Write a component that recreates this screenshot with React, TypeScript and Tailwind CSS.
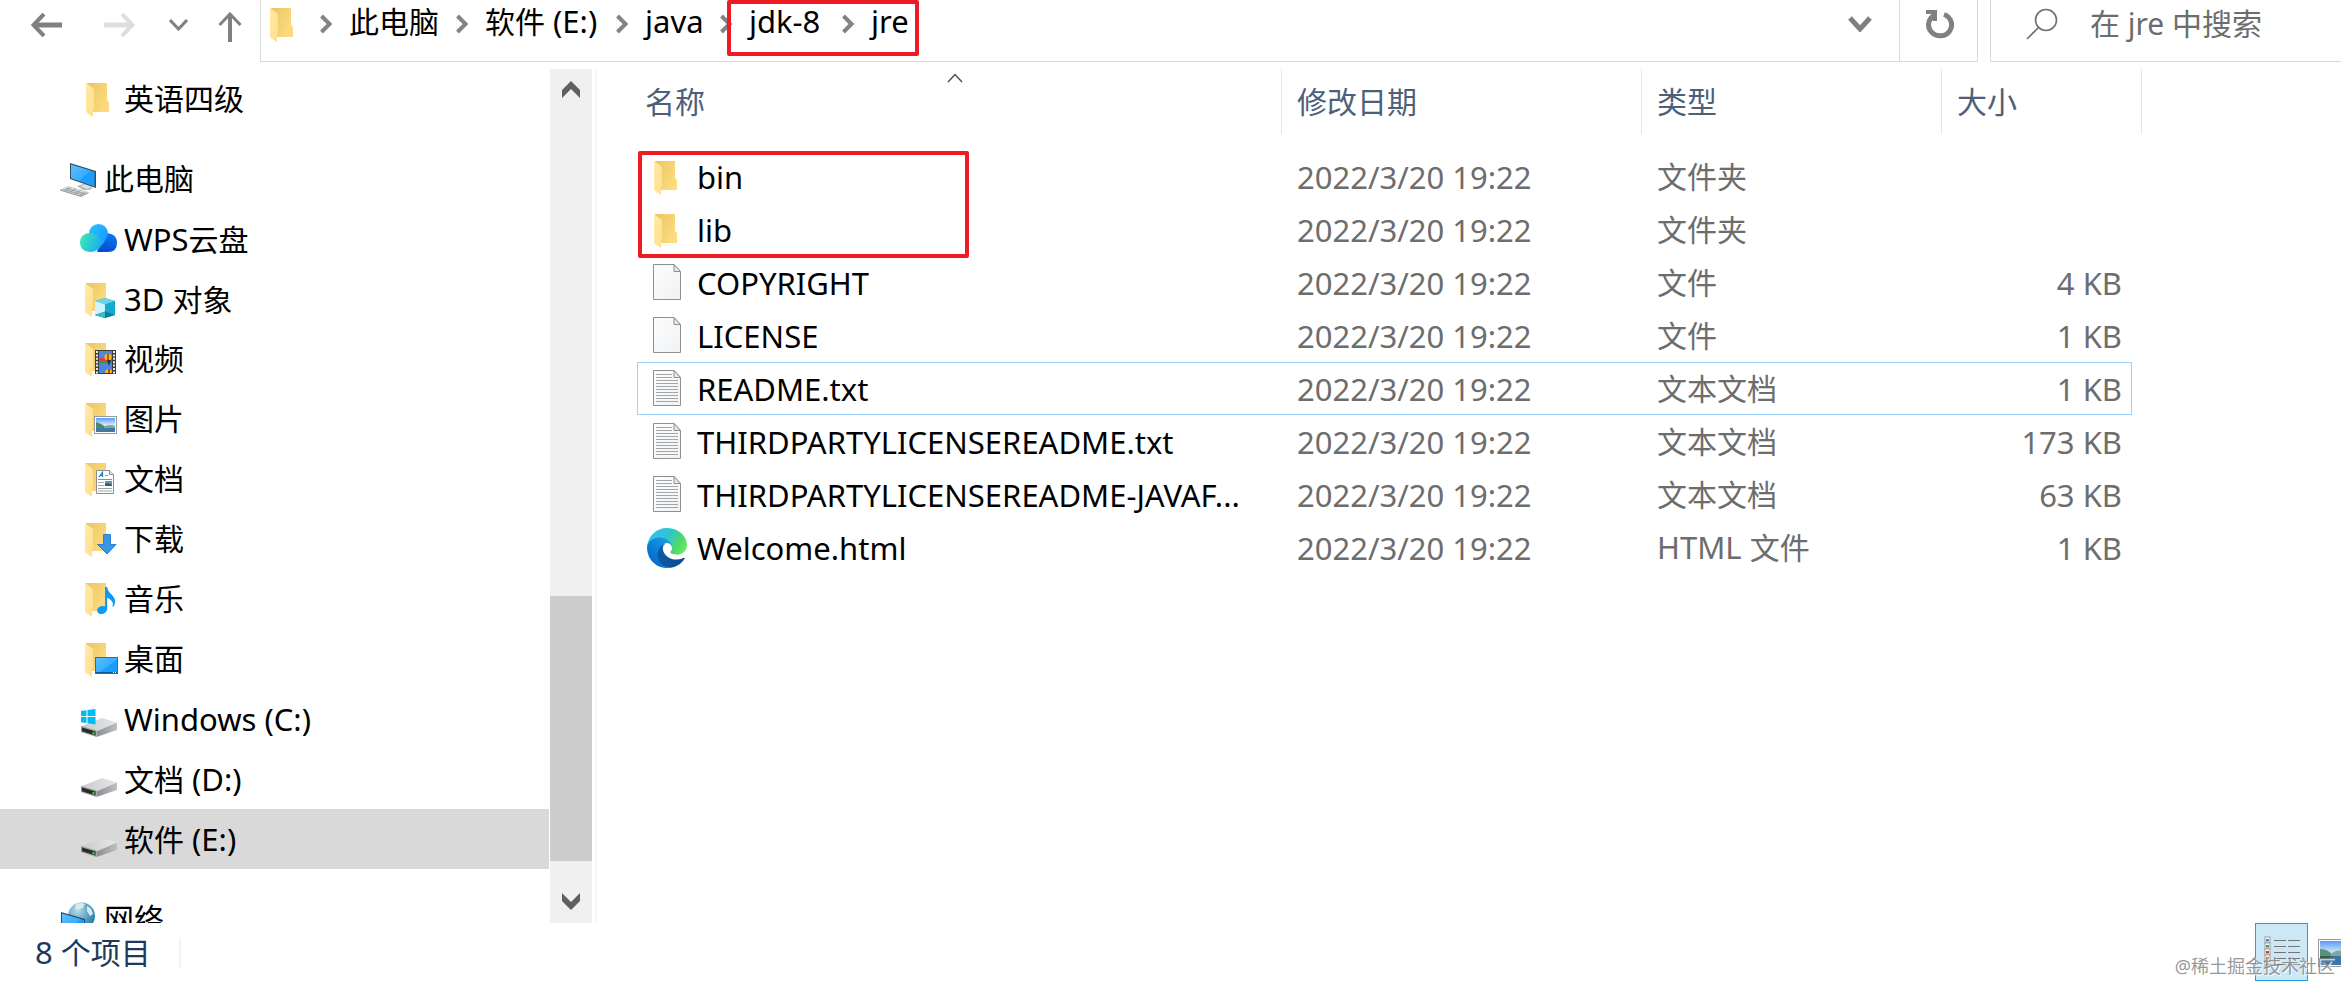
import type { ReactNode } from "react";

/* Latin runs are set slightly larger than Han characters so the two scripts look even. */
function Mixed({ text }: { text: string }) {
  const parts = text.split(/([\u2e80-\u9fff]+)/).filter(Boolean);
  return (
    <>
      {parts.map((part, i) =>
        /[\u2e80-\u9fff]/.test(part) ? (
          <span key={i} className="text-[30px]">{part}</span>
        ) : (
          <span key={i} className="text-[31px] whitespace-pre">{part}</span>
        ),
      )}
    </>
  );
}

function Defs() {
  return (
    <svg width="0" height="0" className="absolute" aria-hidden="true">
      <defs>
        <linearGradient id="flap" x1="0" y1="0" x2="1" y2="1">
          <stop offset="0" stopColor="#ffeaa8" />
          <stop offset="1" stopColor="#ffe08a" />
        </linearGradient>
        <linearGradient id="back" x1="0" y1="0" x2="1" y2="0.6">
          <stop offset="0" stopColor="#e9c462" />
          <stop offset="1" stopColor="#fddc7f" />
        </linearGradient>
        <linearGradient id="screen" x1="0" y1="0" x2="1" y2="1">
          <stop offset="0" stopColor="#5cc0ff" />
          <stop offset="0.55" stopColor="#38acff" />
          <stop offset="0.56" stopColor="#1b9dff" />
          <stop offset="1" stopColor="#1b9dff" />
        </linearGradient>
        <linearGradient id="cloudTop" x1="0" y1="0" x2="1" y2="1">
          <stop offset="0" stopColor="#2bc3ff" />
          <stop offset="1" stopColor="#1090ff" />
        </linearGradient>
        <linearGradient id="cloudRight" x1="0.6" y1="0" x2="0.3" y2="1">
          <stop offset="0" stopColor="#0a78f0" />
          <stop offset="1" stopColor="#0648cf" />
        </linearGradient>
        <linearGradient id="cloudLeft" x1="0" y1="0.3" x2="1" y2="0.6">
          <stop offset="0" stopColor="#3fe6b4" />
          <stop offset="1" stopColor="#12a6fa" />
        </linearGradient>
        <linearGradient id="driveTop" x1="0" y1="0" x2="1" y2="0">
          <stop offset="0" stopColor="#c9cacc" />
          <stop offset="1" stopColor="#e6e7ea" />
        </linearGradient>
        <linearGradient id="driveSide" x1="0" y1="0" x2="1" y2="0">
          <stop offset="0" stopColor="#8b8c8e" />
          <stop offset="1" stopColor="#bfc0c2" />
        </linearGradient>
        <linearGradient id="paper" x1="0" y1="0" x2="1" y2="1">
          <stop offset="0" stopColor="#fdfdfd" />
          <stop offset="1" stopColor="#f0f2f4" />
        </linearGradient>
        <linearGradient id="sky" x1="0" y1="0" x2="0" y2="1">
          <stop offset="0" stopColor="#5b9bf5" />
          <stop offset="0.55" stopColor="#e3f3fb" />
          <stop offset="1" stopColor="#e3f3fb" />
        </linearGradient>
        <radialGradient id="globe" cx="0.35" cy="0.3" r="0.8">
          <stop offset="0" stopColor="#b9dbe8" />
          <stop offset="0.6" stopColor="#4d9dc0" />
          <stop offset="1" stopColor="#1f6f9b" />
        </radialGradient>
        <linearGradient id="edgeDark" x1="0.1" y1="0.7" x2="1" y2="0.7">
          <stop offset="0" stopColor="#0c59a4" />
          <stop offset="1" stopColor="#114a8b" />
        </linearGradient>
        <linearGradient id="edgeBlue" x1="0.9" y1="0.2" x2="0.2" y2="1">
          <stop offset="0" stopColor="#1b9de2" />
          <stop offset="0.4" stopColor="#0f85dc" />
          <stop offset="1" stopColor="#0067c8" />
        </linearGradient>
        <linearGradient id="edgeGreen" x1="0" y1="0.3" x2="1" y2="0.7">
          <stop offset="0" stopColor="#35c1f1" />
          <stop offset="0.45" stopColor="#2ec5cf" />
          <stop offset="0.8" stopColor="#52d966" />
          <stop offset="1" stopColor="#66eb6e" />
        </linearGradient>
      </defs>
    </svg>
  );
}

function Icon({ children }: { children: ReactNode }) {
  return (
    <svg width="40" height="40" viewBox="0 0 40 40" className="block shrink-0" aria-hidden="true">
      {children}
    </svg>
  );
}

const Folder = () => (
  <Icon>
    <path d="M8 4H28V21L30 23V33H13Z" fill="url(#back)" />
    <path d="M7 4L14 9Q15 10 15 12V29L14 30V38L8 34Q7 33 7 32Z" fill="url(#flap)" />
  </Icon>
);

const FolderWith = ({ children }: { children: ReactNode }) => (
  <Icon>
    <path d="M7 4H27V32H13Z" fill="url(#back)" />
    <path d="M6 4L13 9Q14 10 14 12V29L13 30V38L7 34Q6 33 6 32Z" fill="url(#flap)" />
    {children}
  </Icon>
);

const Computer = () => (
  <Icon>
    <path d="M18 27L27 24L34 28L31 31L24 31Z" fill="#b5babd" />
    <path d="M22 27L27 25L33 28L28 30Z" fill="#dfe2e4" />
    <path d="M11 4L37 12V29L11 20Z" fill="#3c4a52" />
    <path d="M12 5.500L35.500 12.800V27.500L12 19.200Z" fill="url(#screen)" />
    <path d="M1 30.500L9 27L29.500 33L22 37.500Z" fill="#d5d8da" />
    <path d="M1 30.500V31.500L22 38L29.500 34V33L22 37Z" fill="#8f9497" />
    <path d="M4 30.500L24 36M7 29.200L26.500 35M6 32L12 28.200M11 33.400L17 29.700M16 34.800L22 31.200M21 36.300L26.500 32.700" stroke="#90979b" strokeWidth="0.8" fill="none" />
  </Icon>
);

const Cloud = () => (
  <Icon>
    <path d="M18 33L26 14Q38 14 38 24Q38 33 29 33Z" fill="url(#cloudRight)" />
    <path d="M10 14.500A9.500 9.500 0 0 1 29 14.500Q29 18 26 21.500L18 31L10 20Z" fill="url(#cloudTop)" />
    <path d="M10.500 14Q16 14 19.500 18Q23 22 26 22L20 29.500Q16.500 33 11 33Q1 32.500 1 23.500Q1.500 14.500 10.500 14Z" fill="url(#cloudLeft)" />
  </Icon>
);

const Objects3D = () => (
  <FolderWith>
    <path d="M16 22L26 19L36 22V36L26 39L16 36Z" fill="#18b0cf" />
    <path d="M16 22L26 19L36 22L26 25.500Z" fill="#6cd3e4" />
    <path d="M16 22L26 25.500V33L16 36Z" fill="#d2f3f7" />
    <path d="M26 25.500L36 22V36L26 33Z" fill="#17a9cf" />
    <path d="M16 36L26 32.500L36 36L26 39Z" fill="#0d7f95" />
    <path d="M16 36L26 32.500V39Z" fill="#38bccb" />
  </FolderWith>
);

const Videos = () => (
  <FolderWith>
    <rect x="16" y="11" width="21" height="24" fill="#3b3b3b" />
    <rect x="20" y="12" width="13" height="22" fill="#4b86e0" />
    <path d="M20 19H33V22H20Z" fill="#dd3b52" />
    <path d="M20 22H33V24H20Z" fill="#2f9b45" />
    <circle cx="29" cy="18" r="3.500" fill="#f2c20b" />
    <path d="M28 14.500H30V21H28Z" fill="#c94b17" />
    <path d="M28 21H32L30 27Z" fill="#253447" />
    <path d="M26 34Q26 30 30 30Q33 30 33 34Z" fill="#f2c20b" />
    <path d="M29 30H31V34H29Z" fill="#d33a22" />
    <path d="M18 12V35M35 12V35" stroke="#e9e9e9" strokeWidth="2" strokeDasharray="2 1.400" />
  </FolderWith>
);

const Pictures = () => (
  <FolderWith>
    <rect x="15.500" y="17.500" width="22" height="17" fill="#fff" stroke="#9a9a9a" />
    <rect x="17" y="19" width="19" height="14" fill="url(#sky)" />
    <path d="M17 23Q22 24 26 27.500L36 29V30H17Z" fill="#4d8a6b" />
    <path d="M26 27Q31 25 36 27V30H24Z" fill="#7fa79a" />
    <rect x="17" y="29" width="19" height="4" fill="#41799f" />
  </FolderWith>
);

const Documents = () => (
  <FolderWith>
    <path d="M17.500 11.500H30.500L34.500 15.500V34.500H17.500Z" fill="#fff" stroke="#8d8d8d" />
    <path d="M30.500 11.500V15.500H34.500" fill="#e6e6e6" stroke="#8d8d8d" />
    <path d="M20 18L23.500 13.500V18M21.500 16.500H23.500" stroke="#1778c8" strokeWidth="1.200" fill="none" />
    <path d="M26 16.500H29M19 20.500H33" stroke="#4aa3de" strokeWidth="1.200" />
    <rect x="26" y="22" width="7" height="5" fill="#5b96c4" />
    <path d="M26 25L29 24L33 26V27H26Z" fill="#2d6350" />
    <path d="M19 23.500H25M19 26.500H25M19 29.500H33M19 32H33" stroke="#9fa6ab" />
  </FolderWith>
);

const Downloads = () => (
  <FolderWith>
    <path d="M24.500 15.500H31.500V25.500H37L28 35L18.500 25.500H24.500Z" fill="#3b95e4" stroke="#2681d4" />
  </FolderWith>
);

const Music = () => (
  <FolderWith>
    <ellipse cx="23" cy="31" rx="5" ry="4" transform="rotate(-15 23 31)" fill="#0b9af5" />
    <path d="M26 8H28.200Q28.500 12 33 16Q37.500 20.500 35.500 25.500Q35 27.500 33.500 28Q35.500 22 28.200 18.500V31H26Z" fill="#0b9af5" />
  </FolderWith>
);

const Desktop = () => (
  <FolderWith>
    <rect x="16.500" y="18.500" width="22" height="16" fill="url(#screen)" stroke="#0b78c6" />
    <path d="M17 33.500H38" stroke="#075a99" />
    <path d="M34 33.500H35M36 33.500H37" stroke="#fff" />
  </FolderWith>
);

const DriveBody = () => (
  <>
    <path d="M2 27.500L23 19L38 23.500L18 33Z" fill="url(#driveTop)" />
    <path d="M17.500 32.500L38 23.500V31L17.500 38Z" fill="url(#driveSide)" />
    <path d="M2 27L17.500 31.500V38L2 33Z" fill="#9a9b9d" />
    <path d="M3 28.500L16.500 32.500V36.500L3 32.300Z" fill="#2b2b2b" />
    <rect x="13.500" y="33" width="2" height="2.500" fill="#35d23b" />
  </>
);

const Drive = () => (
  <Icon>
    <DriveBody />
  </Icon>
);

const WindowsDrive = () => (
  <Icon>
    <DriveBody />
    <path d="M2 12L7.500 11.200V17H2ZM8.500 11L16.500 10V17H8.500ZM2 18H7.500V24L2 23.200ZM8.500 18H16.500V25.500L8.500 24.200Z" fill="#00bcf2" />
  </Icon>
);

const Network = () => (
  <Icon>
    <circle cx="22.500" cy="17" r="13.500" fill="url(#globe)" />
    <path d="M17 5Q22 3 26 5L24 9L19 11L16 9ZM28 7Q33 9 34 15L31 17L28 12Z" fill="#d9ebe9" />
    <path d="M2 13L26 20V37L2 30Z" fill="#35495a" />
    <path d="M3 14.500L25 21V36L3 29Z" fill="url(#screen)" />
  </Icon>
);

const Page = ({ lines }: { lines?: boolean }) => (
  <Icon>
    <path d="M6.500 1.500H27L33.500 8.500V36.500H6.500Z" fill="url(#paper)" stroke="#8f8f8f" />
    <path d="M27 1.500V8.500H33.500Z" fill="#e9e9e9" stroke="#8f8f8f" />
    {lines && (
      <path d="M9 5.500H25M9 8.500H25M9 11.500H31M9 14.500H31M9 17.500H31M9 20.500H31M9 23.500H31M9 26.500H31M9 29.500H31M9 32.500H31" stroke="#a3a6a8" />
    )}
  </Icon>
);

const Blank = () => <Page />;
const TextPage = () => <Page lines />;

const Edge = () => (
  <svg width="40" height="40" viewBox="0 0 256 256" className="block shrink-0" aria-hidden="true">
    <path fill="url(#edgeDark)" d="M235.680 190.480c-3.460 1.800-7 3.400-10.600 4.730a101.930 101.930 0 0 1-35.890 6.460c-47.300 0-88.510-32.540-88.510-74.300a31.480 31.480 0 0 1 16.430-27.300c-42.800 1.800-53.800 46.400-53.800 72.530 0 73.880 68.090 81.370 82.760 81.370 7.910 0 19.840-2.300 27-4.560l1.310-.44a128.340 128.340 0 0 0 66.600-52.800 4 4 0 0 0-5.300-5.690Z" />
    <path fill="url(#edgeBlue)" d="M105.730 241.420a79.200 79.200 0 0 1-22.740-21.340 80.720 80.720 0 0 1 29.530-120c3.120-1.470 8.450-4.130 15.540-4a32.350 32.350 0 0 1 25.690 13 31.880 31.880 0 0 1 6.360 18.660c0-.21 24.460-79.600-80-79.600-43.900 0-80 41.660-80 78.210a130.150 130.150 0 0 0 12.110 56 128 128 0 0 0 156.380 67.110 75.550 75.550 0 0 1-62.780-8Z" />
    <path fill="url(#edgeGreen)" d="M152.330 148.860c-.81 1.050-3.300 2.500-3.300 5.660 0 2.610 1.700 5.120 4.720 7.230 14.380 10 41.490 8.680 41.560 8.680a59.560 59.560 0 0 0 30.270-8.350 61.380 61.380 0 0 0 30.430-52.880c.26-22.410-8-37.310-11.340-43.910C223.460 23.840 177.720 0 128 0A128 128 0 0 0 0 126.200c.48-36.540 36.800-66.050 80-66.050 3.500 0 23.460.34 42 10.070 16.340 8.580 24.900 18.940 30.850 29.210 6.180 10.670 7.280 24.150 7.280 29.520s-2.740 13.330-7.800 19.910Z" />
  </svg>
);

const Sep = () => (
  <svg width="14" height="20" viewBox="0 0 14 20" className="block shrink-0" aria-hidden="true">
    <path d="M2.500 2L10.500 10L2.500 18" fill="none" stroke="#838383" strokeWidth="4" />
  </svg>
);

function Crumb({ label, width }: { label: string; width: string }) {
  return (
    <a href="#" className={`block whitespace-nowrap ${width}`}>
      <Mixed text={label} />
    </a>
  );
}

function AddressRow() {
  return (
    <header className="flex h-[62px] shrink-0 leading-[48px]">
      <div className="flex w-[260px] shrink-0 items-center pb-3 pl-[31px]">
        <button aria-label="后退" className="mr-[42px] w-[31px]">
          <svg width="31" height="24" viewBox="0 0 31 24" className="block" fill="none" stroke="#808080">
            <path d="M31 12H3" strokeWidth="5" />
            <path d="M13 1L2.500 12L13 23" strokeWidth="4" />
          </svg>
        </button>
        <button aria-label="前进" className="mr-[34px] w-[31px]" disabled>
          <svg width="31" height="24" viewBox="0 0 31 24" className="block" fill="none" stroke="#dedede">
            <path d="M0 12H28" strokeWidth="5" />
            <path d="M18 1L28.500 12L18 23" strokeWidth="4" />
          </svg>
        </button>
        <button aria-label="最近浏览的位置" className="mr-[30px] w-[19px]">
          <svg width="19" height="12" viewBox="0 0 19 12" className="block" fill="none" stroke="#808080">
            <path d="M1 1L9.500 10L18 1" strokeWidth="3" />
          </svg>
        </button>
        <button aria-label="上移" className="mt-1 w-[24px]">
          <svg width="24" height="30" viewBox="0 0 24 30" className="block" fill="none" stroke="#808080">
            <path d="M12 30V3" strokeWidth="4" />
            <path d="M1.500 13L12 2L22.500 13" strokeWidth="3" />
          </svg>
        </button>
      </div>
      <div className="flex min-w-0 flex-1 border-b border-l border-[#d9d9d9]">
        <nav aria-label="地址" className="flex h-12 min-w-0 flex-1 items-center gap-4 pl-0.5">
          <Folder />
          <Sep />
          <Crumb label="此电脑" width="w-[90px]" />
          <Sep />
          <Crumb label="软件 (E:)" width="w-[114px]" />
          <Sep />
          <Crumb label="java" width="w-[58px]" />
          <Sep />
          <div className="relative flex h-12 items-center gap-4">
            <Crumb label="jdk-8" width="w-[76px]" />
            <Sep />
            <Crumb label="jre" width="w-[36px]" />
            <div className="pointer-events-none absolute -right-3 -bottom-2 -left-[22px] top-0 rounded-[2px] border-4 border-[#ed1c24]" />
          </div>
        </nav>
        <button aria-label="展开地址" className="flex h-12 w-[78px] shrink-0 items-center justify-center">
          <svg width="24" height="16" viewBox="0 0 24 16" className="block" fill="none" stroke="#808080">
            <path d="M2 2L12 13L22 2" strokeWidth="5" />
          </svg>
        </button>
      </div>
      <div className="w-[79px] shrink-0 border-x border-b border-[#d9d9d9]">
        <button aria-label="刷新" className="flex h-12 w-full items-center justify-center">
          <svg width="30" height="30" viewBox="0 0 30 30" className="block">
            <path d="M10 6.500A11.500 11 0 1 0 20 5.500" fill="none" stroke="#808080" strokeWidth="5" />
            <path d="M2 1H13V12H9V5H2Z" fill="#808080" />
          </svg>
        </button>
      </div>
      <div className="ml-3 flex w-[351px] shrink-0 border-b border-l border-[#d9d9d9]">
        <label className="flex h-12 w-full items-center pl-[35px]">
          <svg width="32" height="32" viewBox="0 0 32 32" className="block shrink-0" fill="none" stroke="#6f6f6f" strokeWidth="1.600">
            <circle cx="20" cy="12" r="10.500" />
            <path d="M12.500 19.500L1 31" />
          </svg>
          <input
            type="search"
            aria-label="搜索"
            placeholder="在 jre 中搜索"
            className="ml-8 h-12 w-full min-w-0 bg-transparent text-[30px] outline-none placeholder:text-[#6d6d6d]"
          />
        </label>
      </div>
    </header>
  );
}

const quickItems = [{ label: "英语四级", icon: Folder }];

const pcItems = [
  { label: "WPS云盘", icon: Cloud },
  { label: "3D 对象", icon: Objects3D },
  { label: "视频", icon: Videos },
  { label: "图片", icon: Pictures },
  { label: "文档", icon: Documents },
  { label: "下载", icon: Downloads },
  { label: "音乐", icon: Music },
  { label: "桌面", icon: Desktop },
  { label: "Windows (C:)", icon: WindowsDrive },
  { label: "文档 (D:)", icon: Drive },
  { label: "软件 (E:)", icon: Drive, selected: true },
];

function TreeItem({
  label,
  icon: Glyph,
  root,
  selected,
}: {
  label: string;
  icon: () => ReactNode;
  root?: boolean;
  selected?: boolean;
}) {
  return (
    <li>
      <a
        href="#"
        className={`flex h-[60px] items-center gap-[5px] text-[30px] leading-10 whitespace-nowrap ${root ? "pl-[59px]" : "pl-[79px]"} ${selected ? "bg-[#d9d9d9]" : ""}`}
      >
        <Glyph />
        <span>
          <Mixed text={label} />
        </span>
      </a>
    </li>
  );
}

function Sidebar() {
  return (
    <aside className="flex w-[597px] shrink-0 overflow-hidden border-r-2 border-[#f5f5f5]">
      <nav aria-label="导航窗格" className="h-full min-w-0 flex-1 overflow-hidden">
        <ul className="flex flex-col gap-5">
          {quickItems.map((item) => (
            <TreeItem key={item.label} {...item} />
          ))}
          <li>
            <ul>
              <TreeItem label="此电脑" icon={Computer} root />
              {pcItems.map((item) => (
                <TreeItem key={item.label} {...item} />
              ))}
            </ul>
          </li>
          <TreeItem label="网络" icon={Network} root />
        </ul>
      </nav>
      <div className="mr-[3px] ml-px flex w-[42px] shrink-0 flex-col bg-[#f0f0f0]">
        <button aria-label="向上滚动" className="flex h-[42px] items-center justify-center">
          <svg width="20" height="18" viewBox="0 0 20 18" className="block">
            <path d="M10 0L19 9V17L10 8L1 17V9Z" fill="#606060" />
          </svg>
        </button>
        <div className="flex-[485]" />
        <div className="flex-[265] bg-[#cdcdcd]" />
        <div className="flex-[20]" />
        <button aria-label="向下滚动" className="flex h-[42px] items-center justify-center">
          <svg width="20" height="18" viewBox="0 0 20 18" className="block">
            <path d="M10 17L19 8V0L10 9L1 0V8Z" fill="#606060" />
          </svg>
        </button>
      </div>
    </aside>
  );
}

const date = "2022/3/20 19:22";

const files = [
  { name: "bin", icon: Folder, type: "文件夹", size: "" },
  { name: "lib", icon: Folder, type: "文件夹", size: "" },
  { name: "COPYRIGHT", icon: Blank, type: "文件", size: "4 KB" },
  { name: "LICENSE", icon: Blank, type: "文件", size: "1 KB" },
  { name: "README.txt", icon: TextPage, type: "文本文档", size: "1 KB", focused: true },
  { name: "THIRDPARTYLICENSEREADME.txt", icon: TextPage, type: "文本文档", size: "173 KB" },
  { name: "THIRDPARTYLICENSEREADME-JAVAF...", icon: TextPage, type: "文本文档", size: "63 KB" },
  { name: "Welcome.html", icon: Edge, type: "HTML 文件", size: "1 KB" },
];

function FileTable() {
  return (
    <main className="relative min-w-0 flex-1 overflow-hidden pl-10">
      <table className="w-[1505px] table-fixed border-separate border-spacing-0 text-left text-[30px] leading-10 whitespace-nowrap">
        <colgroup>
          <col className="w-[645px]" />
          <col className="w-[360px]" />
          <col className="w-[300px]" />
          <col className="w-[190px]" />
          <col className="w-[10px]" />
        </colgroup>
        <thead className="text-[#4c607a]">
          <tr className="h-[65px]">
            <th scope="col" aria-sort="ascending" className="relative border-r border-[#e5e5e5] p-0 pl-2 font-normal">
              <button className="block">名称</button>
              <svg width="16" height="10" viewBox="0 0 16 10" className="absolute top-1 left-1/2 -translate-x-3" aria-hidden="true">
                <path d="M1 9L8 1.500L15 9" fill="none" stroke="#505050" strokeWidth="1.500" />
              </svg>
            </th>
            <th scope="col" className="border-r border-[#e5e5e5] p-0 pl-[15px] font-normal">
              <button className="block">修改日期</button>
            </th>
            <th scope="col" className="border-r border-[#e5e5e5] p-0 pl-[15px] font-normal">
              <button className="block">类型</button>
            </th>
            <th scope="col" colSpan={2} className="border-r border-[#e5e5e5] p-0 pl-[15px] font-normal">
              <button className="block">大小</button>
            </th>
          </tr>
        </thead>
        <tbody className="text-[#6d6d6d]">
          <tr className="h-4" aria-hidden="true">
            <td colSpan={5} className="p-0" />
          </tr>
          {files.map(({ name, icon: Glyph, type, size, focused }) => {
            const edge = focused ? "border-[#99d1ff]" : "border-transparent";
            return (
              <tr key={name} className="h-[53px]">
                <td className={`border-y border-l p-0 pl-[9px] text-black ${edge}`}>
                  <div className="flex items-center gap-2.5">
                    <Glyph />
                    <span className="text-[31px]">{name}</span>
                  </div>
                </td>
                <td className={`border-y p-0 pl-[15px] text-[31px] ${edge}`}>{date}</td>
                <td className={`border-y p-0 pl-[15px] ${edge}`}>
                  <Mixed text={type} />
                </td>
                <td className={`border-y border-r p-0 pr-[9px] text-right text-[31px] ${edge}`}>{size}</td>
                <td className="p-0" />
              </tr>
            );
          })}
        </tbody>
      </table>
      <div className="pointer-events-none absolute top-[82px] left-[41px] h-[107px] w-[331px] rounded-[2px] border-4 border-[#ed1c24]" />
    </main>
  );
}

function StatusBar() {
  const marks = ["#4d86c6", "#3c9a5b", "#d23c2a", "#d98a35", "#3f7fa8"];
  return (
    <footer className="relative flex h-[59px] shrink-0 items-stretch justify-between">
      <div className="flex items-center text-[#1e395b]">
        <span className="w-[143px] pl-[35px] text-[30px] leading-10 whitespace-nowrap">
          <Mixed text="8 个项目" />
        </span>
        <span className="ml-9 h-7 w-0.5 bg-[#f2f2f2]" />
      </div>
      <div className="flex">
        <button aria-label="详细信息" aria-pressed="true" className="flex h-[58px] w-[53px] items-center justify-center border border-[#26a0da] bg-[#cce8f6]">
          <svg width="36" height="32" viewBox="0 0 36 32" className="block">
            {marks.map((c, i) => (
              <g key={c}>
                <rect x="1" y={1 + i * 6} width="5" height="6" fill="#fff" stroke="#9a9a9a" />
                <rect x="2" y={3 + i * 6} width="3" height="2.500" fill={c} />
                <path d={`M10 ${4.500 + i * 6}H22M24 ${4.500 + i * 6}H36`} stroke="#757575" />
              </g>
            ))}
          </svg>
        </button>
        <button aria-label="大缩略图" className="flex w-[33px] items-center overflow-hidden pl-2.5">
          <svg width="36" height="28" viewBox="0 0 36 28" className="block shrink-0">
            <rect x="0.500" y="0.500" width="35" height="27" fill="#fff" stroke="#9a9a9a" />
            <rect x="2" y="2" width="32" height="24" fill="url(#sky)" />
            <path d="M2 10Q9 10 14 15L20 17H2Z" fill="#5a8f78" />
            <path d="M12 16Q17 10 26 12L34 17V18H12Z" fill="#7fa79a" />
            <rect x="2" y="17" width="32" height="9" fill="#3d76a5" />
            <path d="M2 17H16L8 20H2Z" fill="#2f5f5b" />
          </svg>
        </button>
      </div>
      <span className="pointer-events-none absolute right-1.5 bottom-1 text-[18px] leading-6 text-[#7c7c7c]/80 [text-shadow:1px_1px_1px_#ffffff]">
        @稀土掘金技术社区
      </span>
    </footer>
  );
}

export default function App() {
  return (
    <div className="flex h-screen flex-col overflow-hidden bg-white font-['Noto_Sans','Noto_Sans_CJK_SC',sans-serif] text-black">
      <Defs />
      <AddressRow />
      <div className="flex min-h-0 flex-1 pt-[7px]">
        <Sidebar />
        <FileTable />
      </div>
      <StatusBar />
    </div>
  );
}
